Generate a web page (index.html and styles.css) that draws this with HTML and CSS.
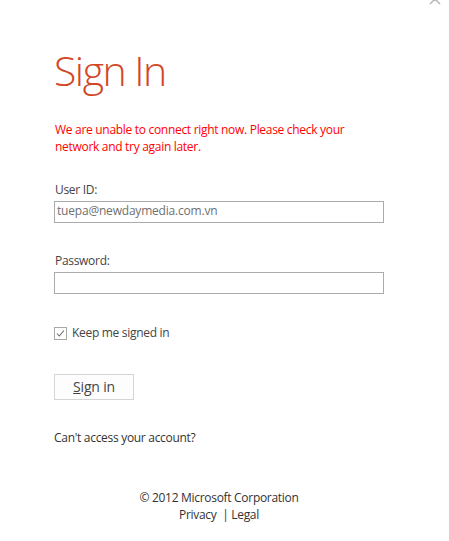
FILE: index.html
```html
<!DOCTYPE html>
<html>
<head>
<meta charset="utf-8">
<link rel="stylesheet" href="styles.css">
</head>
<body>
<div class="close">
  <svg width="12" height="12" viewBox="0 0 12 12"><path d="M1 1 L11 11 M11 1 L1 11" stroke="#b8b8b8" stroke-width="1.5" fill="none"/></svg>
</div>
<main class="page">
  <h1 class="title">Sign In</h1>
  <p class="error">We are unable to connect right now. Please check your network and try again later.</p>
  <div class="field">
    <label class="label">User ID:</label>
    <div class="input">tuepa@newdaymedia.com.vn</div>
  </div>
  <div class="field field-pw">
    <label class="label">Password:</label>
    <div class="input"></div>
  </div>
  <div class="keep">
    <span class="checkbox">
      <svg width="11" height="11" viewBox="0 0 11 11"><path d="M2 5.5 L4.3 8 L9 2.5" stroke="#6a6a6a" stroke-width="1.1" fill="none"/></svg>
    </span>
    <span class="keep-text">Keep me signed in</span>
  </div>
  <button class="btn"><span class="ul">S</span>ign in</button>
  <a class="link">Can't access your account?</a>
  <footer class="footer">
    <div>© 2012 Microsoft Corporation</div>
    <div>Privacy &nbsp;| Legal</div>
  </footer>
</main>
</body>
</html>
```
FILE: styles.css
```css
html, body {
  margin: 0;
  padding: 0;
  background: #fff;
}
body {
  font-family: "Open Sans", "Noto Sans", sans-serif;
  font-size: 12px;
  letter-spacing: -0.3px;
  color: #444;
  width: 449px;
  height: 541px;
  position: relative;
  overflow: hidden;
}
.close {
  position: absolute;
  left: 429px;
  top: -8px;
}
.page {
  display: flex;
  flex-direction: column;
  align-items: flex-start;
  padding: 42px 0 0 54px;
  width: 330px;
}
.title {
  margin: 0;
  font-weight: 300;
  font-size: 41px;
  letter-spacing: -1.5px;
  line-height: 56px;
  color: #d24726;
}
.error {
  margin: 23px 0 0 1px;
  color: #ff0000;
  font-size: 12px;
  line-height: 17px;
}
.field {
  margin-top: 27px;
  width: 330px;
}
.field-pw {
  margin-top: 30px;
}
.label {
  display: block;
  line-height: 16px;
  margin: 0 0 3px 1px;
  color: #444;
}
.input {
  box-sizing: border-box;
  width: 330px;
  height: 22px;
  border: 1px solid #ababab;
  padding: 0 2px;
  line-height: 18px;
  font-size: 12px;
  letter-spacing: -0.2px;
  color: #707070;
  background: #fff;
}
.keep {
  display: flex;
  align-items: center;
  gap: 5px;
  margin-top: 31px;
}
.checkbox {
  box-sizing: border-box;
  width: 13px;
  height: 13px;
  border: 1px solid #a8a8a8;
  display: flex;
  align-items: center;
  justify-content: center;
}
.checkbox svg {
  display: block;
}
.keep-text {
  line-height: 16px;
}
.btn {
  margin-top: 33px;
  box-sizing: border-box;
  width: 80px;
  height: 26px;
  border: 1px solid #d5d5d5;
  background: #fdfdfd;
  font-family: "Open Sans", "Noto Sans", sans-serif;
  font-size: 14px;
  letter-spacing: -0.2px;
  color: #444;
  padding: 0;
  line-height: 22px;
}
.ul {
  text-decoration: underline;
}
.link {
  margin-top: 30px;
  line-height: 16px;
  color: #333;
}
.footer {
  margin-top: 43px;
  width: 330px;
  text-align: center;
  line-height: 17px;
  color: #333;
}
```
